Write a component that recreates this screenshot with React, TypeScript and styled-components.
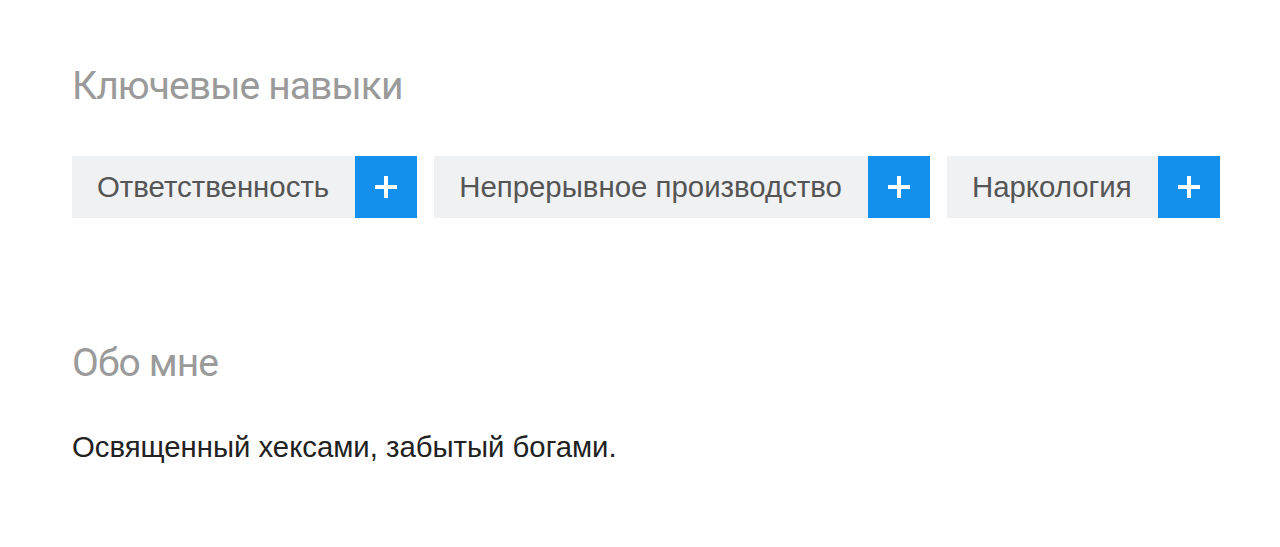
import React from "react";
import styled, { createGlobalStyle } from "styled-components";

const Global = createGlobalStyle`
  html, body { margin: 0; padding: 0; background: #fff; }
`;

const Page = styled.div`
  padding: 60px 72px 0 72px;
  font-family: "Liberation Sans", Arial, sans-serif;
`;

const Heading = styled.h2`
  margin: 0;
  font-family: Roboto, "Noto Sans", sans-serif;
  font-weight: 400;
  font-size: 39px;
  line-height: 52px;
  color: #9a9a9a;
  letter-spacing: -0.9px;
`;

const Skills = styled.div`
  display: flex;
  gap: 17px;
  margin-top: 44px;
`;

const Skill = styled.div`
  display: flex;
  flex-shrink: 0;
  height: 62px;
`;

const SkillName = styled.span`
  display: flex;
  align-items: center;
  padding: 0 26px 0 25px;
  background: #f0f1f3;
  color: #555555;
  font-size: 29.4px;
  white-space: nowrap;
`;

const AddButton = styled.button`
  width: 62px;
  height: 62px;
  flex-shrink: 0;
  border: none;
  padding: 0;
  background: #1390ee;
  display: flex;
  align-items: center;
  justify-content: center;
  cursor: pointer;
`;

const Section = styled.section<{ $gap?: number }>`
  margin-top: ${(p) => p.$gap ?? 0}px;
`;

const Text = styled.p`
  margin: 41px 0 0;
  font-size: 29.3px;
  line-height: 34px;
  color: #222;
`;

const Plus = () => (
  <svg width="22" height="22" viewBox="0 0 22 22">
    <rect x="9" y="0" width="4" height="22" fill="#fff" />
    <rect x="0" y="9" width="22" height="4" fill="#fff" />
  </svg>
);

const skills = ["Ответственность", "Непрерывное производство", "Наркология"];

export default function App() {
  return (
    <>
      <Global />
      <Page>
        <Section>
          <Heading>Ключевые навыки</Heading>
          <Skills>
            {skills.map((s) => (
              <Skill key={s}>
                <SkillName>{s}</SkillName>
                <AddButton aria-label="Добавить">
                  <Plus />
                </AddButton>
              </Skill>
            ))}
          </Skills>
        </Section>
        <Section $gap={119}>
          <Heading>Обо мне</Heading>
          <Text>Освященный хексами, забытый богами.</Text>
        </Section>
      </Page>
    </>
  );
}
